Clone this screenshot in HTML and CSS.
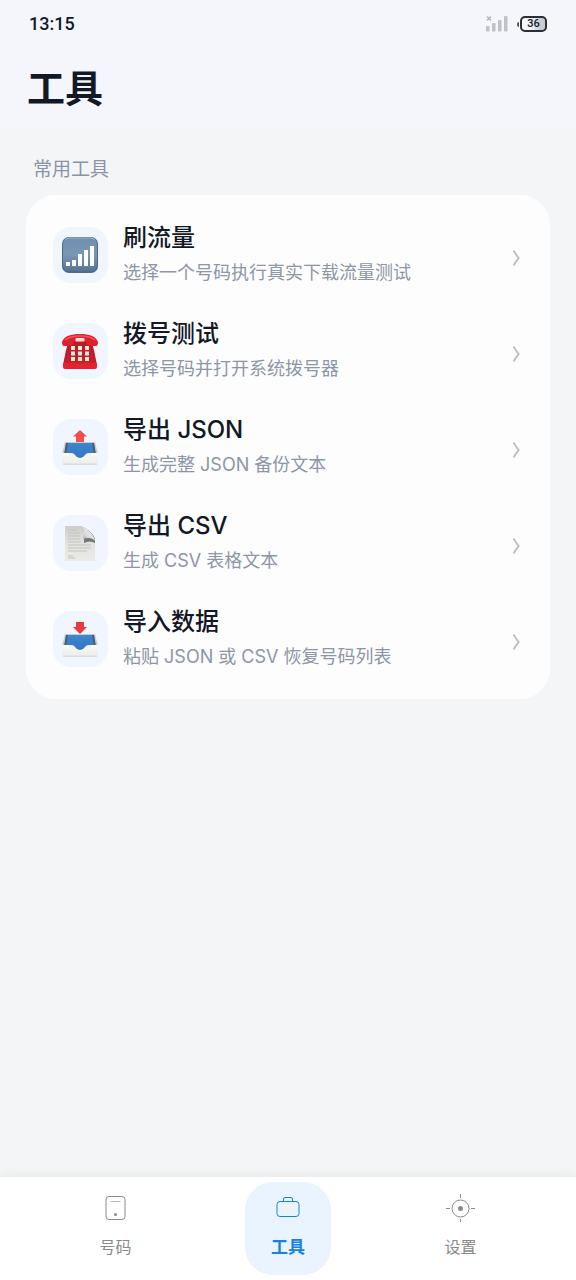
FILE: index.html
```html
<!DOCTYPE html>
<html lang="zh-CN">
<head>
    <meta charset="UTF-8">
    <meta name="viewport" content="width=device-width, initial-scale=1">
    <title>工具</title>
    <link rel="stylesheet" href="styles.css">
</head>
<body>
    <header class="header">
        <div class="status">
            <span class="time">13:15</span>
            <svg class="signal" width="22" height="18" viewBox="0 0 22 18">
                <path d="M1 1.500l4 4M5 1.500l-4 4" stroke="#b4b6ba" stroke-width="1.500"/>
                <g fill="#c0c1c5">
                    <rect x="0" y="11" width="3.500" height="5.500" rx="1"/>
                    <rect x="6" y="8" width="3.500" height="8.500" rx="1"/>
                    <rect x="12" y="5" width="3.500" height="11.500" rx="1"/>
                    <rect x="18" y="1" width="3.500" height="15.500" rx="1"/>
                </g>
            </svg>
            <span class="battery"><span class="level">36</span></span>
        </div>
        <h1 class="title">工具</h1>
    </header>

    <main class="main">
        <h2 class="section-title">常用工具</h2>
        <div class="card">
            <a class="row" href="#traffic">
                <span class="icon">
                    <svg width="38" height="38" viewBox="0 0 38 38">
                        <defs>
                            <linearGradient id="sig" x1="0" y1="0" x2="0" y2="1">
                                <stop offset="0" stop-color="#7190b0"/>
                                <stop offset=".5" stop-color="#7897b5"/>
                                <stop offset="1" stop-color="#557596"/>
                            </linearGradient>
                        </defs>
                        <rect x="1" y="1" width="36" height="36" rx="7" fill="#4c6c8b"/>
                        <rect x="2" y="2" width="34" height="33" rx="6" fill="url(#sig)"/>
                        <path d="M4 4q1-2 5-2h20q4 0 5 2" fill="none" stroke="#9fb6cb"/>
                        <path d="M5 26h4v4H5zM11 24h4v6h-4zM17 18h4v12h-4zM23 14h4v16h-4zM29 10h4v20h-4z" fill="#fff"/>
                    </svg>
                </span>
                <span class="text">
                    <span class="name">刷流量</span>
                    <span class="desc">选择一个号码执行真实下载流量测试</span>
                </span>
                <svg class="arrow" width="10" height="22" viewBox="0 0 10 22"><path d="M1.500 6.500L6.500 14l-5 7.500"/></svg>
            </a>
            <a class="row" href="#dial">
                <span class="icon">
                    <svg width="38" height="38" viewBox="0 0 38 38">
                        <defs>
                            <linearGradient id="tel" x1="0" y1="0" x2="0" y2="1">
                                <stop offset="0" stop-color="#b51c27"/>
                                <stop offset="1" stop-color="#c91d2a"/>
                            </linearGradient>
                        </defs>
                        <path d="M8 8h22l3 10 3 15H2l3-15z" fill="url(#tel)"/>
                        <path d="M2 31h34v4q0 2-2 2H4q-2 0-2-2z" fill="#e32430"/>
                        <path d="M1 10C3 4 10 2 19 2s16 2 18 8q0 4-2 4h-6q-3 0-4-4H13q-1 4-4 4H3q-2 0-2-4z" fill="#de202c"/>
                        <path d="M4 8q5-4 15-4t15 4" fill="none" stroke="#f0545a" stroke-width="1.500"/>
                        <rect x="14.500" y="6" width="9" height="3.500" rx="1" fill="#f4dfdb"/>
                        <path d="M10 14h4v4h-4zM17 14h4v4h-4zM24 14h4v4h-4zM10 19.500h4v4h-4zM17 19.500h4v4h-4zM24 19.500h4v4h-4zM10 25h4v4h-4zM17 25h4v4h-4zM24 25h4v4h-4z" fill="#f8e9dd"/>
                    </svg>
                </span>
                <span class="text">
                    <span class="name">拨号测试</span>
                    <span class="desc">选择号码并打开系统拨号器</span>
                </span>
                <svg class="arrow" width="10" height="22" viewBox="0 0 10 22"><path d="M1.500 6.500L6.500 14l-5 7.500"/></svg>
            </a>
            <a class="row" href="#export-json">
                <span class="icon">
                    <svg width="38" height="38" viewBox="0 0 38 38">
                        <defs>
                            <linearGradient id="tray" x1="0" y1="0" x2="0" y2="1">
                                <stop offset="0" stop-color="#f8f8f6"/>
                                <stop offset=".8" stop-color="#efefed"/>
                                <stop offset="1" stop-color="#d8d8d6"/>
                            </linearGradient>
                            <linearGradient id="blue" x1="0" y1="0" x2="0" y2="1">
                                <stop offset="0" stop-color="#3f87cf"/>
                                <stop offset="1" stop-color="#2f74c4"/>
                            </linearGradient>
                        </defs>
                        <path d="M19 2l7 6.500h-3V14h-8V8.500h-3z" fill="#f0504e"/>
                        <path d="M4 14h30l3 12H1z" fill="#c9cccd"/>
                        <path d="M5 15h28l2 11H3z" fill="#44596a"/>
                        <path d="M7 15h24l2 10v6H5v-6z" fill="url(#blue)"/>
                        <path d="M1 25h9q3 0 4 2 2 3 5 3t5-3q1-2 4-2h9v10q0 2-2 2H3q-2 0-2-2z" fill="url(#tray)"/>
                    </svg>
                </span>
                <span class="text">
                    <span class="name">导出 JSON</span>
                    <span class="desc">生成完整 JSON 备份文本</span>
                </span>
                <svg class="arrow" width="10" height="22" viewBox="0 0 10 22"><path d="M1.500 6.500L6.500 14l-5 7.500"/></svg>
            </a>
            <a class="row" href="#export-csv">
                <span class="icon">
                    <svg width="38" height="38" viewBox="0 0 38 38">
                        <defs>
                            <linearGradient id="page" x1="0" y1="0" x2="0" y2="1">
                                <stop offset="0" stop-color="#cdcdcb"/>
                                <stop offset=".5" stop-color="#e2e2df"/>
                                <stop offset="1" stop-color="#ebebe8"/>
                            </linearGradient>
                            <linearGradient id="curl" x1="0" y1="1" x2="1" y2="0">
                                <stop offset="0" stop-color="#8a8a8a"/>
                                <stop offset=".4" stop-color="#dcdcdc"/>
                                <stop offset="1" stop-color="#f4f4f4"/>
                            </linearGradient>
                        </defs>
                        <path d="M4 2h15q12 4 15 15v20H4z" fill="url(#page)"/>
                        <path d="M15 2h4q4 2 4 7v10q6-3 11 0v-4q-3-9-15-13z" fill="#777"/>
                        <path d="M19 2c5 2 4 8 3 13 5-2 10-1 12 2C33 10 26 4 19 2z" fill="url(#curl)"/>
                        <path d="M7 6h9M7 9h12M7 12h12M7 15h12M7 18h13M7 21h23M7 24h23M7 27h19M7 32h5M7 34h7" stroke="#c3c3c0"/>
                    </svg>
                </span>
                <span class="text">
                    <span class="name">导出 CSV</span>
                    <span class="desc">生成 CSV 表格文本</span>
                </span>
                <svg class="arrow" width="10" height="22" viewBox="0 0 10 22"><path d="M1.500 6.500L6.500 14l-5 7.500"/></svg>
            </a>
            <a class="row" href="#import">
                <span class="icon">
                    <svg width="38" height="38" viewBox="0 0 38 38">
                        <path d="M4 14h30l3 12H1z" fill="#c9cccd"/>
                        <path d="M5 15h28l2 11H3z" fill="#44596a"/>
                        <path d="M7 15h24l2 10v6H5v-6z" fill="url(#blue)"/>
                        <path d="M15 2h8v5h3l-7 7-7-7h3z" fill="#e93b3d"/>
                        <path d="M1 25h9q3 0 4 2 2 3 5 3t5-3q1-2 4-2h9v10q0 2-2 2H3q-2 0-2-2z" fill="url(#tray)"/>
                    </svg>
                </span>
                <span class="text">
                    <span class="name">导入数据</span>
                    <span class="desc">粘贴 JSON 或 CSV 恢复号码列表</span>
                </span>
                <svg class="arrow" width="10" height="22" viewBox="0 0 10 22"><path d="M1.500 6.500L6.500 14l-5 7.500"/></svg>
            </a>
        </div>
    </main>

    <nav class="tabbar">
        <a class="tab" href="#numbers">
            <svg width="30" height="30" viewBox="0 0 30 30">
                <rect x="5" y="3.500" width="19" height="23" rx="3"/>
                <path d="M9.500 8.500h10" opacity=".6"/>
                <circle class="dot" cx="14.500" cy="21.500" r="1.500"/>
            </svg>
            <span>号码</span>
        </a>
        <a class="tab active" href="#tools">
            <svg width="30" height="30" viewBox="0 0 30 30">
                <rect x="4" y="8.500" width="22" height="15" rx="3"/>
                <path d="M10.500 8.500V6q0-1.500 1.500-1.500h6q1.500 0 1.500 1.500v2.500"/>
            </svg>
            <span>工具</span>
        </a>
        <a class="tab" href="#settings">
            <svg width="30" height="30" viewBox="0 0 30 30">
                <circle cx="14.500" cy="15.500" r="8.500"/>
                <circle class="dot" cx="14.500" cy="15.500" r="2.500"/>
                <path d="M14.500 1v4M14.500 26v3M0 15.500h4M25 15.500h4"/>
            </svg>
            <span>设置</span>
        </a>
    </nav>
</body>
</html>
```

FILE: styles.css
```css
* {
    box-sizing: border-box;
}

body {
    display: flex;
    flex-direction: column;
    min-height: 100vh;
    margin: 0;
    background: #f3f5f7;
    color: #121826;
    font-family: Inter, "Noto Sans CJK SC", sans-serif;
}

a {
    color: inherit;
    text-decoration: none;
}

/* 顶部 */
.header {
    background: #f4f6fb;
}

.status {
    display: flex;
    align-items: center;
    height: 48px;
    padding: 0 29px;
}

.time {
    flex: 1;
    font: 500 18px/24px Roboto, sans-serif;
}

.battery {
    display: flex;
    align-items: center;
    margin-left: 9px;
}

/* 电池正极 */
.battery::before {
    content: "";
    width: 2px;
    height: 5px;
    border-radius: 2px 0 0 2px;
    background: #55585f;
}

.level {
    width: 27px;
    height: 16px;
    margin-left: 1px;
    border: 2px solid #2b2e35;
    border-radius: 5px;
    background: linear-gradient(90deg, #f4f6fb 36%, #c9cbd0 80%);
    font: 500 11px/12px Roboto, sans-serif;
    text-align: center;
}

.title {
    margin: 0;
    padding: 0 27px;
    font-size: 38px;
    font-weight: 700;
    line-height: 80px;
}

/* 工具列表 */
.main {
    flex: 1;
    padding: 29px 26px;
}

.section-title {
    margin: 0 0 12px;
    padding: 0 7px;
    color: #8b93a7;
    font-size: 19px;
    font-weight: 400;
    line-height: 26px;
}

.card {
    padding: 12px 0;
    border-radius: 30px;
    background: #fdfdfe;
}

.row {
    display: flex;
    align-items: center;
    gap: 15px;
    padding: 13px 28px 13px 27px;
}

.icon {
    display: flex;
    align-items: center;
    width: 55px;
    height: 56px;
    padding-left: 8px;
    border-radius: 18px;
    background: #f1f6fe;
}

.text {
    display: flex;
    flex: 1;
    flex-direction: column;
}

.name {
    font-size: 24px;
    font-weight: 500;
    line-height: 36px;
}

.desc {
    color: #8e95a6;
    font-size: 18px;
    line-height: 34px;
}

.arrow {
    fill: none;
    stroke: #bfc0c3;
    stroke-width: 2;
}

/* 底部导航 */
.tabbar {
    position: sticky;
    bottom: 0;
    display: flex;
    padding: 5px 29px;
    background: #fff;
    box-shadow: 0 -1px 12px rgba(0, 0, 0, .06);
}

.tab {
    display: flex;
    flex: 1;
    flex-direction: column;
    align-items: center;
    gap: 12px;
    height: 93px;
    padding-top: 11px;
    color: #8a8a8a;
    font-size: 16px;
    line-height: 24px;
}

.tab svg {
    fill: none;
    stroke: currentColor;
}

.tab .dot {
    fill: currentColor;
    stroke: none;
}

.tab.active {
    flex: 0 0 86px;
    margin: 0 43px;
    border-radius: 28px;
    background: #e9f4fe;
    color: #1a80e0;
    font-size: 17px;
    font-weight: 700;
}
```
